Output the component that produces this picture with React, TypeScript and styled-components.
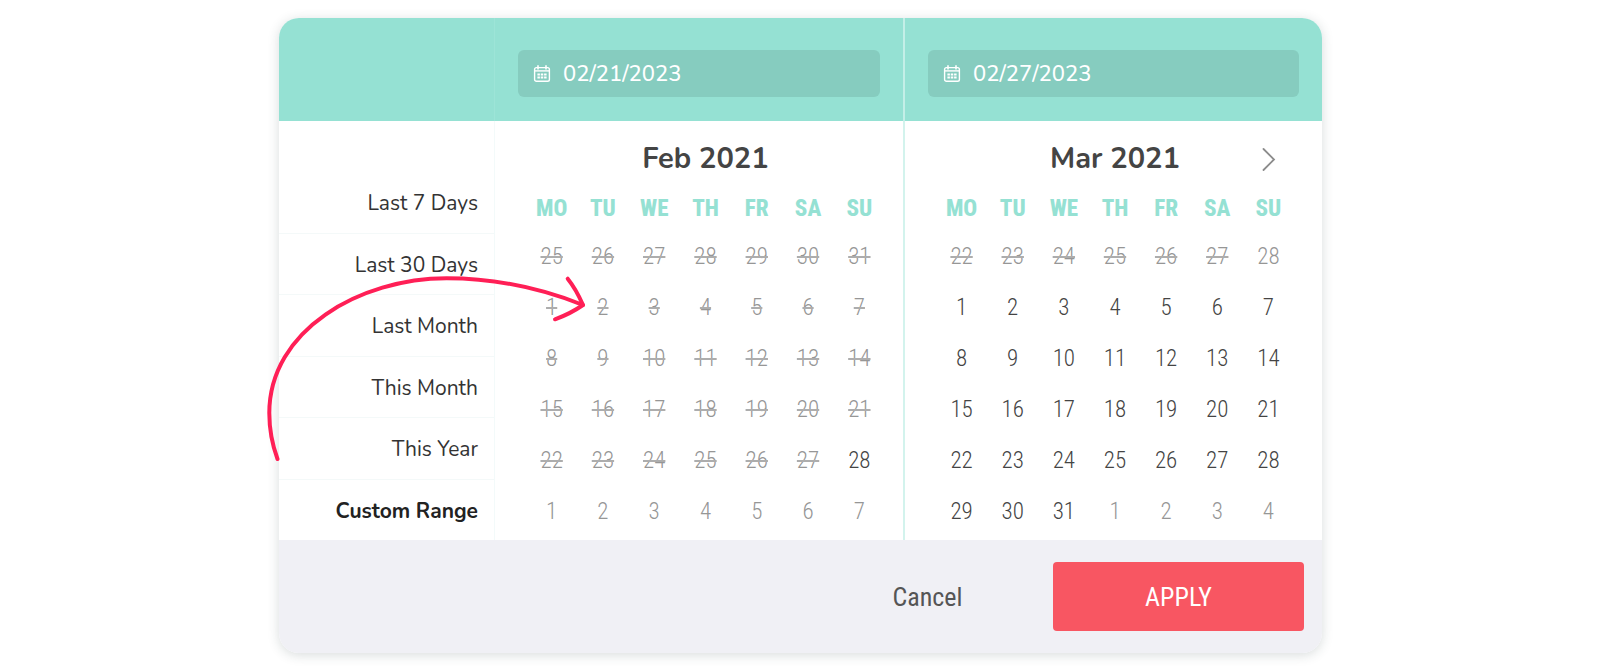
import React from "react";
import styled, { createGlobalStyle } from "styled-components";

const rounded = `Nunito, Lato, "Noto Sans", sans-serif`;
const condensed = `"Roboto Condensed", "Liberation Sans Narrow", Roboto, sans-serif`;

const mint = "#95e1d3";

const GlobalStyle = createGlobalStyle`
  *, *::before, *::after { box-sizing: border-box; }
  body { margin: 0; background: #fff; }
  button, input { font: inherit; color: inherit; }
  button { border: 0; background: none; padding: 0; cursor: pointer; }
`;

const Page = styled.main`
  display: flex;
  justify-content: center;
  padding: 18px 16px 17px 17px;
  font-family: ${rounded};
`;

const Picker = styled.section`
  position: relative;
  width: 100%;
  max-width: 1043px;
  border-radius: 20px;
  background: #fff;
  box-shadow: 0 2px 12px rgba(40, 60, 60, 0.18);
`;

const Columns = styled.div`
  display: grid;
  grid-template-columns: 216px minmax(0, 410fr) minmax(0, 417fr);
`;

const Header = styled(Columns)`
  background: ${mint};
  border-radius: 20px 20px 0 0;
`;

const HeaderCell = styled.div<{ $line?: string }>`
  padding: 32px 23px 24px;
  border-right: ${(p) => p.$line ?? "0"};
`;

const DateField = styled.label`
  display: flex;
  align-items: center;
  gap: 12px;
  height: 47px;
  padding: 0 15px;
  border-radius: 6px;
  background: #86ccbf;
  color: #fff;
`;

const DateInput = styled.input`
  flex: 1;
  min-width: 0;
  padding: 0;
  border: 0;
  outline: 0;
  background: none;
  font-size: 22px;
  line-height: 30px;
  font-weight: 500;
`;

const RangeList = styled.nav`
  display: flex;
  flex-direction: column;
  padding-top: 51px;
  border-right: 1px solid #f3fafa;
`;

const RangeButton = styled.button<{ $active?: boolean }>`
  flex: 1;
  padding: 2px 16px 0 0;
  text-align: right;
  font-size: 21px;
  line-height: 28px;
  font-weight: ${(p) => (p.$active ? 700 : 400)};
  color: ${(p) => (p.$active ? "#222" : "#333")};

  & + & { border-top: 1px solid #f4f9f9; }
`;

const MonthPanel = styled.section<{ $right: number; $divided?: boolean }>`
  padding: 14px ${(p) => p.$right}px 3px 31px;
  border-right: ${(p) => (p.$divided ? "2px solid #d3f3ed" : "0")};
`;

const MonthHead = styled.header`
  display: grid;
  grid-template-columns: 1fr auto 1fr;
  align-items: center;
  height: 47px;
`;

const MonthTitle = styled.h2`
  grid-column: 2;
  margin: 0;
  font-size: 29px;
  line-height: 36px;
  font-weight: 700;
  color: #444;
`;

const NextButton = styled.button`
  justify-self: end;
  display: flex;
  padding: 2px 18px 0 0;
  color: #8c8c8c;
`;

const DayTable = styled.table`
  width: 100%;
  table-layout: fixed;
  border-collapse: collapse;
  font-family: ${condensed};
  font-size: 23px;
  line-height: 28px;
  text-align: center;
`;

const Weekday = styled.th`
  height: 49px;
  padding: 4px 0 0;
  font-weight: 800;
  color: ${mint};
`;

const DayCell = styled.td`
  height: 51px;
  padding: 0;
`;

const DayButton = styled.button<{ $muted: boolean; $struck: boolean }>`
  width: 100%;
  font-weight: ${(p) => (p.$muted ? 300 : 350)};
  color: ${(p) => (p.$muted ? "#969696" : "#444")};
  text-decoration: ${(p) => (p.$struck ? "line-through 2px #adadad" : "none")};
`;

const Footer = styled.footer`
  display: flex;
  justify-content: flex-end;
  padding: 22px 18px 22px 24px;
  border-radius: 0 0 20px 20px;
  background: #f0f0f5;
`;

const ActionButton = styled.button<{ $primary?: boolean }>`
  flex: 0 1 251px;
  height: 69px;
  border-radius: 4px;
  font-family: ${condensed};
  font-size: 26px;
  line-height: 32px;
  font-weight: 450;
  background: ${(p) => (p.$primary ? "#f85662" : "transparent")};
  color: ${(p) => (p.$primary ? "#fff" : "#555")};
`;

const ArrowOverlay = styled.svg`
  position: absolute;
  left: -19px;
  top: 242px;
  pointer-events: none;
`;

function CalendarIcon() {
  return (
    <svg width="18" height="18" viewBox="0 0 18 18" fill="none" stroke="currentColor" aria-hidden="true">
      <rect x="1.6" y="2.6" width="14.8" height="13.6" rx="1.8" strokeWidth="1.4" />
      <path d="M1.6 5.9h14.8" strokeWidth="1.4" />
      <path d="M5 .9v3M13 .9v3" strokeWidth="1.6" strokeLinecap="round" />
      <path d="M4.4 9.5h9.2M4.4 12.5h9.2" strokeWidth="1.9" strokeDasharray="2.5 .85" />
    </svg>
  );
}

const ranges = ["Last 7 Days", "Last 30 Days", "Last Month", "This Month", "This Year", "Custom Range"];
const weekdays = ["MO", "TU", "WE", "TH", "FR", "SA", "SU"];

type Day = { label: number; muted: boolean; struck: boolean };

/* Six weeks of days: the tail of the previous month, the month, the head of the next. */
function buildWeeks(prevFrom: number, prevTo: number, length: number, struckCount: number): Day[][] {
  const days: Day[] = [];
  const prevCount = prevTo - prevFrom + 1;
  for (let i = 0; i < 42; i++) {
    const struck = i < struckCount;
    const inMonth = i >= prevCount && i < prevCount + length;
    const label = i < prevCount ? prevFrom + i : inMonth ? i - prevCount + 1 : i - prevCount - length + 1;
    days.push({ label, struck, muted: struck || !inMonth });
  }
  return Array.from({ length: 6 }, (_, w) => days.slice(w * 7, w * 7 + 7));
}

function Month(props: { title: string; weeks: Day[][]; right: number; divided?: boolean; next?: boolean }) {
  return (
    <MonthPanel $right={props.right} $divided={props.divided}>
      <MonthHead>
        <MonthTitle>{props.title}</MonthTitle>
        {props.next && (
          <NextButton type="button" aria-label="Next month">
            <svg width="14" height="24" viewBox="0 0 14 24" fill="none" stroke="currentColor" strokeWidth="1.8" strokeLinecap="round">
              <path d="M1.5 1 12 11.5 1.5 22" />
            </svg>
          </NextButton>
        )}
      </MonthHead>
      <DayTable aria-label={props.title}>
        <thead>
          <tr>{weekdays.map((d) => <Weekday key={d} scope="col">{d}</Weekday>)}</tr>
        </thead>
        <tbody>
          {props.weeks.map((week, w) => (
            <tr key={w}>
              {week.map((day, d) => (
                <DayCell key={d}>
                  <DayButton type="button" $muted={day.muted} $struck={day.struck}>{day.label}</DayButton>
                </DayCell>
              ))}
            </tr>
          ))}
        </tbody>
      </DayTable>
    </MonthPanel>
  );
}

export default function App() {
  return (
    <>
      <GlobalStyle />
      <Page>
        <Picker aria-label="Date range">
          <Header>
            <HeaderCell $line="1px solid #9de4d7" />
            <HeaderCell $line="2px solid #c3efe7">
              <DateField>
                <CalendarIcon />
                <DateInput type="text" aria-label="Start date" defaultValue="02/21/2023" />
              </DateField>
            </HeaderCell>
            <HeaderCell>
              <DateField>
                <CalendarIcon />
                <DateInput type="text" aria-label="End date" defaultValue="02/27/2023" />
              </DateField>
            </HeaderCell>
          </Header>
          <Columns>
            <RangeList aria-label="Preset ranges">
              {ranges.map((r) => (
                <RangeButton key={r} type="button" $active={r === "Custom Range"}>{r}</RangeButton>
              ))}
            </RangeList>
            <Month title="Feb 2021" weeks={buildWeeks(25, 31, 28, 34)} right={18} divided />
            <Month title="Mar 2021" weeks={buildWeeks(22, 28, 31, 6)} right={28} next />
          </Columns>
          <Footer>
            <ActionButton type="button">Cancel</ActionButton>
            <ActionButton type="button" $primary>APPLY</ActionButton>
          </Footer>
          <ArrowOverlay width="340" height="210" viewBox="0 0 340 210" fill="none" stroke="#ff1f56" strokeWidth="4" strokeLinecap="round" strokeLinejoin="round" aria-hidden="true">
            <path d="M17.5 199C12 184 9.3 168 9.3 153C9.3 70 100 18.3 186.7 18.3C230 18.3 278 27 323 45" />
            <path d="M307.7 18.7Q316 29 323 45Q310 54 295 59.3" />
          </ArrowOverlay>
        </Picker>
      </Page>
    </>
  );
}
